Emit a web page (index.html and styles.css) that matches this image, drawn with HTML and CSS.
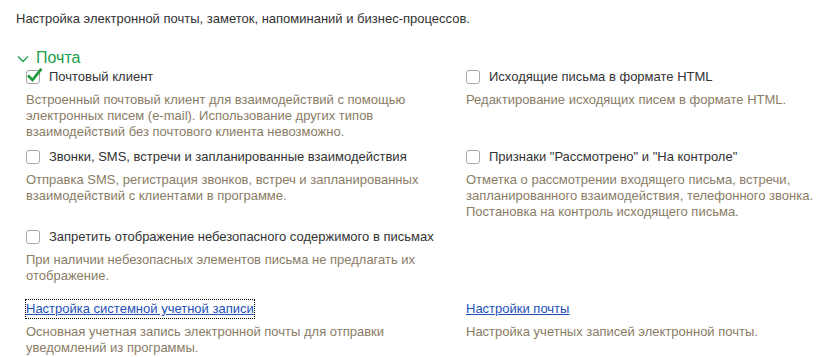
FILE: index.html
```html
<!DOCTYPE html>
<html lang="ru">
  <head>
    <meta charset="UTF-8" />
    <meta name="viewport" content="width=device-width, initial-scale=1.0" />
    <title>Органайзер</title>
    <link rel="stylesheet" href="styles.css">
  </head>
  <body>
    <div class="intro">Настройка электронной почты, заметок, напоминаний и бизнес-процессов.</div>

    <div class="group-title">
      <svg class="chevron" width="12" height="8" viewBox="0 0 12 8">
        <path d="M1 1.5 L6 6.5 L11 1.5" fill="none" stroke="#1e9c4c" stroke-width="1.3" />
      </svg>
      <span>Почта</span>
    </div>

    <div class="options">
      <div class="item">
        <label class="check">
          <span class="box checked">
            <svg class="tick" width="18" height="16" viewBox="0 0 18 16">
              <path d="M3 8.5 L6.5 12 L14.5 2" fill="none" stroke="#1f9a3f" stroke-width="2.8" stroke-linecap="square" />
            </svg>
          </span>
          Почтовый клиент
        </label>
        <div class="note">Встроенный почтовый клиент для взаимодействий с помощью электронных писем (e-mail). Использование других типов взаимодействий без почтового клиента невозможно.</div>
      </div>
      <div class="item">
        <label class="check"><span class="box"></span>Исходящие письма в формате HTML</label>
        <div class="note">Редактирование исходящих писем в формате HTML.</div>
      </div>

      <div class="item">
        <label class="check"><span class="box"></span>Звонки, SMS, встречи и запланированные взаимодействия</label>
        <div class="note">Отправка SMS, регистрация звонков, встреч и запланированных взаимодействий с клиентами в программе.</div>
      </div>
      <div class="item">
        <label class="check"><span class="box"></span>Признаки "Рассмотрено" и "На контроле"</label>
        <div class="note">Отметка о рассмотрении входящего письма, встречи, запланированного взаимодействия, телефонного звонка. Постановка на контроль исходящего письма.</div>
      </div>

      <div class="item">
        <label class="check"><span class="box"></span>Запретить отображение небезопасного содержимого в письмах</label>
        <div class="note">При наличии небезопасных элементов письма не предлагать их отображение.</div>
      </div>
      <div class="item"></div>

      <div class="item link-item">
        <a href="#" class="link focused">Настройка системной учетной записи</a>
        <div class="note">Основная учетная запись электронной почты для отправки уведомлений из программы.</div>
      </div>
      <div class="item link-item">
        <a href="#" class="link">Настройки почты</a>
        <div class="note">Настройка учетных записей электронной почты.</div>
      </div>
    </div>
  </body>
</html>
```

FILE: styles.css
```css
body {
  margin: 0;
  padding: 11px 16px 0;
  background: #fff;
  font-family: "Liberation Sans", Arial, sans-serif;
  font-size: 13px;
  color: #333;
  overflow: hidden;
}
.intro {
  line-height: 16px;
}
.group-title {
  display: flex;
  align-items: center;
  margin-top: 21px;
  height: 20px;
  color: #1e9c4c;
  font-size: 16px;
}
.chevron {
  margin: 1px 7px 0 1px;
}
.options {
  display: grid;
  grid-template-columns: 420px 351px;
  column-gap: 20px;
  row-gap: 8px;
  padding-left: 10px;
}
.check {
  display: flex;
  align-items: center;
  height: 18px;
  line-height: 18px;
  white-space: nowrap;
}
.box {
  position: relative;
  width: 12px;
  height: 12px;
  border: 1px solid #a8a8a8;
  border-radius: 3px;
  background: #fff;
  margin-right: 9px;
  flex: none;
}
.tick {
  position: absolute;
  left: -1px;
  top: -3px;
}
.note {
  margin-top: 6px;
  line-height: 16px;
  color: #8a7c66;
}
.link-item {
  margin-top: 8px;
}
.link {
  display: inline-block;
  height: 18px;
  line-height: 18px;
  color: #2350b8;
  text-decoration: underline;
}
.link.focused {
  outline: 1px dotted #000;
  outline-offset: 0;
}
```
